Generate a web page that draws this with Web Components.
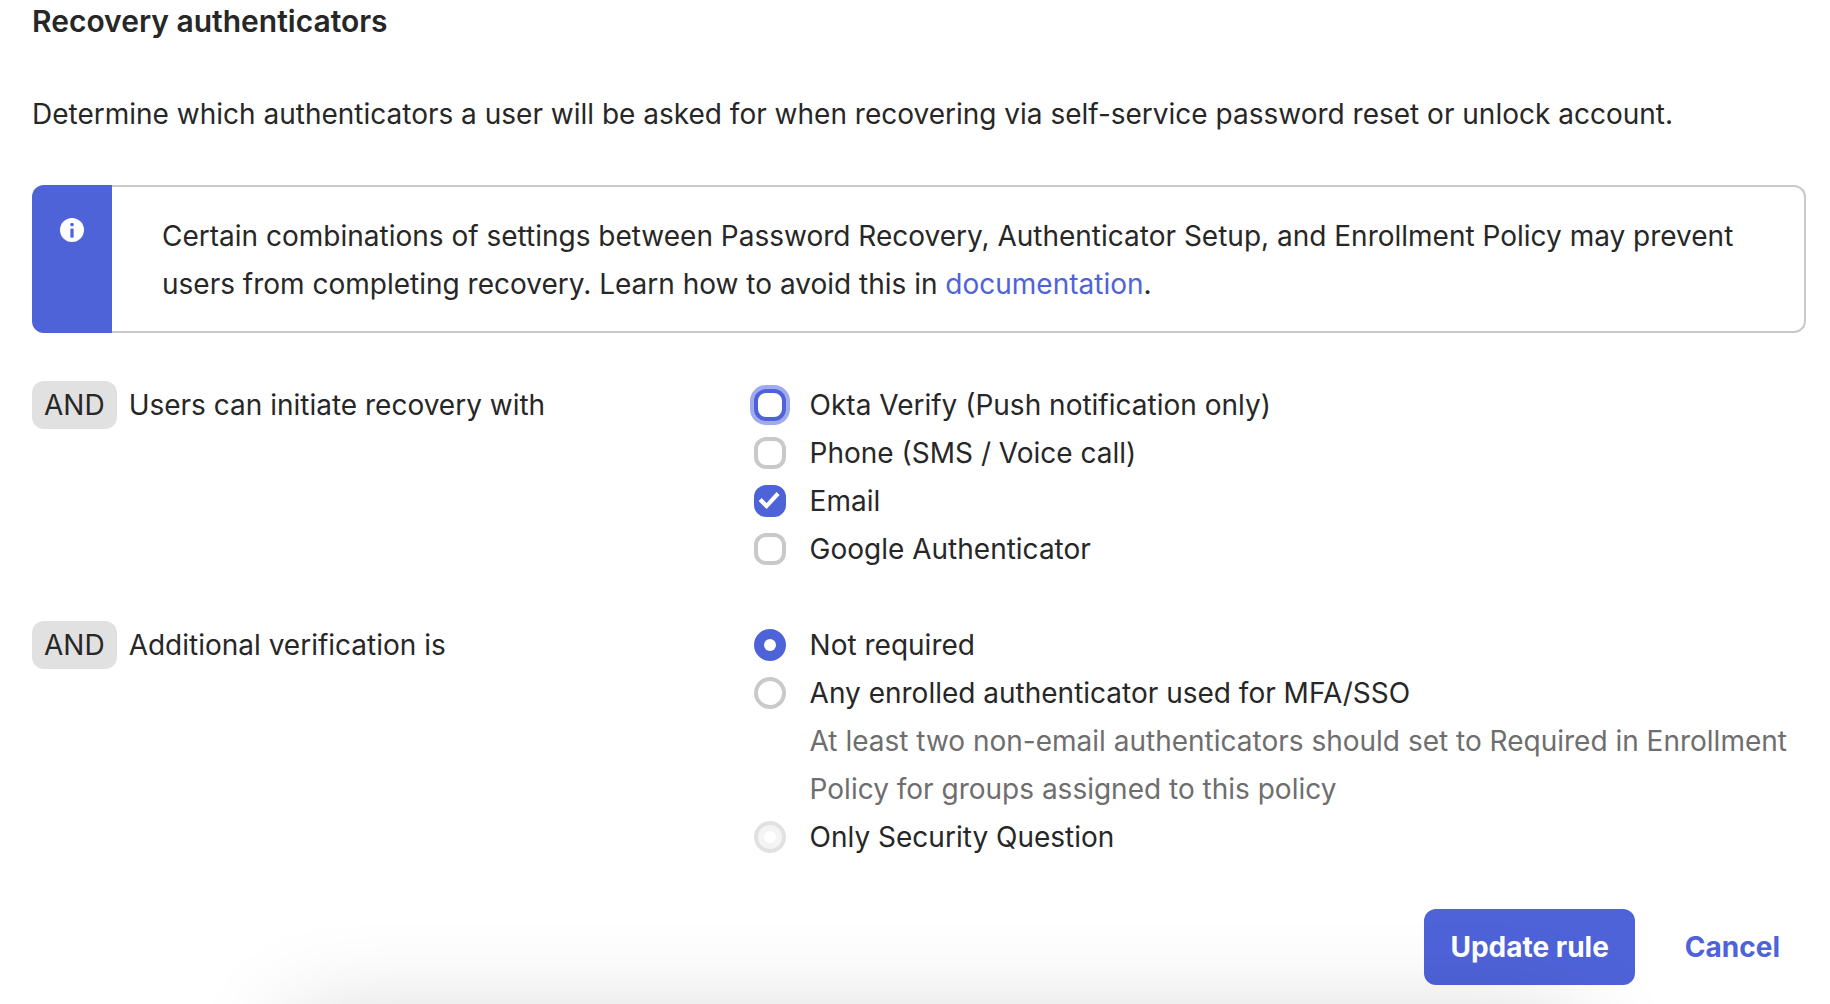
<!DOCTYPE html>
<html lang="en">
<head>
<meta charset="utf-8">
<title>Recovery authenticators</title>
<style>
  body {
    margin: 0;
    background: #fff;
    color: #272727;
    font: 28px/48px Inter, "Liberation Sans", sans-serif;
    --accent: #4f63d9;
    --line: #c9c9c9;
    --chip: #e1e1e1;
    --muted: #6e6e6e;
    overflow: hidden;
  }
</style>
</head>
<body>
<recovery-form></recovery-form>
<window-shade></window-shade>

<script>
function define(name, html) {
  const template = document.createElement('template');
  template.innerHTML = html;
  customElements.define(name, class extends HTMLElement {
    constructor() {
      super();
      this.attachShadow({ mode: 'open' }).append(template.content.cloneNode(true));
    }
  });
}

define('info-callout', `
  <style>
    :host { display: flex; border: 2px solid var(--line); border-left: 0; border-radius: 12px; }
    .bar {
      flex: none; display: flex; justify-content: center; width: 80px; box-sizing: border-box;
      margin: -2px 0; padding-top: 33px;
      background: var(--accent); border-radius: 12px 0 0 12px;
    }
    svg { width: 24px; height: 24px; }
    .body { flex: 1; padding: 25px 50px 23px; }
  </style>
  <div class="bar">
    <svg viewBox="0 0 24 24" role="img" aria-label="Information">
      <circle cx="12" cy="12" r="12" fill="#fff"/>
      <circle cx="12" cy="6.6" r="1.8" fill="#4f63d9"/>
      <rect x="10.4" y="10.6" width="3.2" height="9" fill="#4f63d9"/>
    </svg>
  </div>
  <div class="body"><slot></slot></div>
`);

define('rule-condition', `
  <style>
    :host { display: grid; grid-template-columns: 2fr 3fr; column-gap: 20px; align-items: start; }
    .head { display: flex; gap: 12px; }
    .chip { padding: 0 12px; background: var(--chip); border-radius: 12px; }
  </style>
  <div class="head"><span class="chip">AND</span><slot name="title"></slot></div>
  <div><slot></slot></div>
`);

define('choice-row', `
  <style>
    :host { display: grid; grid-template-columns: 32px 1fr; column-gap: 24px; }
    ::slotted(small) { grid-column: 2; }
  </style>
  <slot></slot>
`);

define('form-actions', `
  <style>
    :host { display: flex; justify-content: flex-end; gap: 24px; }
  </style>
  <slot></slot>
`);

define('window-shade', `
  <style>
    :host {
      position: fixed; top: 100%; left: 16%; right: 14%; height: 300px;
      pointer-events: none;
      box-shadow: 0 20px 96px rgba(0, 0, 0, .19);
    }
  </style>
`);

define('recovery-form', `
  <style>
    :host { display: block; padding: 0 24px 19px 32px; }
    h1 { margin: 0; font-size: 30px; line-height: 42px; font-weight: 600; }
    p { margin: 48px 0 47px; }
    a { color: var(--accent); text-decoration: none; }
    rule-condition { margin-top: 48px; }
    form-actions { margin-top: 48px; }
    small { font-size: inherit; color: var(--muted); }
    input {
      appearance: none; box-sizing: border-box; display: grid; place-items: center;
      width: 32px; height: 32px; margin: 8px 0;
      border: 4px solid var(--line); background: #fff;
    }
    input[type=checkbox] { border-radius: 12px; }
    input[type=radio] { border-radius: 50%; }
    input.active { border-color: var(--accent); box-shadow: 0 0 0 4px #a0abef; }
    input:checked { background: var(--accent); border-color: var(--accent); }
    input:disabled { background: #f4f4f4; border-color: var(--chip); }
    input[type=radio]:checked::before, input[type=radio]:disabled::before {
      content: ""; width: 12px; height: 12px; border-radius: 50%; background: #fff;
    }
    input[type=checkbox]:checked::before {
      content: ""; width: 22px; height: 18px; background: #fff;
      clip-path: polygon(0 9px, 3px 6px, 8px 11px, 18px 0, 21px 3px, 8px 17px);
    }
    button {
      font: inherit; font-weight: 700; height: 76px; padding: 0 26px;
      border: 0; border-radius: 12px; background: none; color: var(--accent);
    }
    button[type=submit] { background: var(--accent); color: #fff; }
  </style>
  <h1>Recovery authenticators</h1>
  <p>Determine which authenticators a user will be asked for when recovering via self-service password reset or unlock account.</p>
  <info-callout>Certain combinations of settings between Password Recovery, Authenticator Setup, and Enrollment Policy may prevent users from completing recovery. Learn how to avoid this in <a href="#">documentation</a>.</info-callout>
  <rule-condition>
    <span slot="title">Users can initiate recovery with</span>
    <choice-row><input type="checkbox" id="push" class="active"><label for="push">Okta Verify (Push notification only)</label></choice-row>
    <choice-row><input type="checkbox" id="phone"><label for="phone">Phone (SMS / Voice call)</label></choice-row>
    <choice-row><input type="checkbox" id="email" checked><label for="email">Email</label></choice-row>
    <choice-row><input type="checkbox" id="google"><label for="google">Google Authenticator</label></choice-row>
  </rule-condition>
  <rule-condition>
    <span slot="title">Additional verification is</span>
    <choice-row><input type="radio" name="extra" id="none" checked><label for="none">Not required</label></choice-row>
    <choice-row><input type="radio" name="extra" id="any"><label for="any">Any enrolled authenticator used for MFA/SSO</label><small>At least two non-email authenticators should set to Required in Enrollment Policy for groups assigned to this policy</small></choice-row>
    <choice-row><input type="radio" name="extra" id="question" disabled><label for="question">Only Security Question</label></choice-row>
  </rule-condition>
  <form-actions>
    <button type="submit">Update rule</button>
    <button type="button">Cancel</button>
  </form-actions>
`);
</script>
</body>
</html>
